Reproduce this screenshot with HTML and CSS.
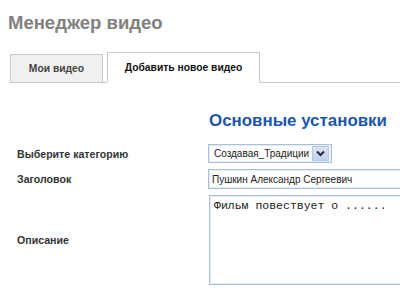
FILE: index.html
```html
<!doctype html>
<html lang="ru">
  <head>
    <meta charset="UTF-8" />
    <title>Менеджер видео</title>
    <link rel="stylesheet" href="styles.css">
  </head>
  <body>
    <h1 class="page-title">Менеджер видео</h1>

    <ul class="tabs">
      <li class="tab">Мои видео</li>
      <li class="tab active">Добавить новое видео</li>
    </ul>

    <div class="settings">
      <h2 class="settings-title">Основные установки</h2>

      <div class="form-row">
        <label class="form-label">Выберите категорию</label>
        <div class="select">
          <span class="select-value">Создавая_Традиции</span>
          <span class="select-btn">
            <svg width="9" height="7" viewBox="0 0 9 7">
              <path d="M1 1.5 L4.5 5 L8 1.5" fill="none" stroke="#1c2a4a" stroke-width="2" />
            </svg>
          </span>
        </div>
      </div>

      <div class="form-row">
        <label class="form-label">Заголовок</label>
        <input class="text-input" type="text" value="Пушкин Александр Сергеевич" />
      </div>

      <div class="form-row">
        <label class="form-label">Описание</label>
        <textarea class="text-area">Фильм повествует о ......</textarea>
      </div>
    </div>
  </body>
</html>
```

FILE: styles.css
```css
body {
  margin: 0;
  font-family: "Liberation Sans", Arial, sans-serif;
  background: #fff;
  overflow: hidden;
}
.page-title {
  margin: 0;
  padding: 12px 0 0 8px;
  font-size: 18.5px;
  font-weight: bold;
  color: #808080;
  line-height: 22px;
}
.tabs {
  list-style: none;
  display: flex;
  align-items: flex-end;
  gap: 4px;
  margin: 18px 0 0 10px;
  padding: 0;
  border-bottom: 1px solid #c8c8c8;
  height: 30px;
}
.tab {
  box-sizing: border-box;
  height: 29px;
  width: 93px;
  margin-bottom: -1px;
  border: 1px solid #c8c8c8;
  background: #f0f0f0;
  color: #444;
  font-size: 10.3px;
  font-weight: bold;
  text-align: center;
  line-height: 28px;
}
.tab.active {
  width: 153px;
  height: 31px;
  background: #fff;
  border-bottom-color: #fff;
  color: #111;
  line-height: 30px;
}
.settings {
  padding: 27px 0 0 17px;
}
.settings-title {
  margin: 0 0 12px 192px;
  font-size: 16.9px;
  font-weight: bold;
  color: #1a56ad;
  line-height: 22px;
}
.form-row {
  display: grid;
  grid-template-columns: 191px 1fr;
  align-items: center;
  margin-bottom: 6px;
}
.form-label {
  font-size: 10.6px;
  font-weight: bold;
  color: #333;
}
.select {
  box-sizing: border-box;
  display: flex;
  align-items: center;
  justify-content: space-between;
  width: 124px;
  height: 19px;
  border: 1px solid #a9c0e4;
  box-shadow: inset 0 0 0 1px #e4ecf8;
  padding: 0 2px 0 5px;
  font-size: 10px;
  color: #222;
}
.select-btn {
  display: flex;
  align-items: center;
  justify-content: center;
  width: 17px;
  height: 15px;
  background: linear-gradient(#dde5f3, #c3d0e8);
  border: 1px solid #b8c8e4;
  box-sizing: border-box;
}
.text-input,
.text-area {
  box-sizing: border-box;
  width: 100%;
  margin: 0;
  border: 1px solid #a9c0e4;
  border-right: none;
  box-shadow: inset 1px 1px 0 #e4ecf8, inset 0 -1px 0 #e4ecf8;
  outline: none;
  color: #222;
}
.text-input {
  height: 20px;
  padding: 0 3px;
  font-family: "Liberation Sans", Arial, sans-serif;
  font-size: 10px;
}
.text-area {
  display: block;
  height: 90px;
  margin-left: 1px;
  width: calc(100% - 1px);
  padding: 3px 4px;
  font-family: "Liberation Mono", "Courier New", monospace;
  font-size: 11.5px;
  resize: none;
}
```
